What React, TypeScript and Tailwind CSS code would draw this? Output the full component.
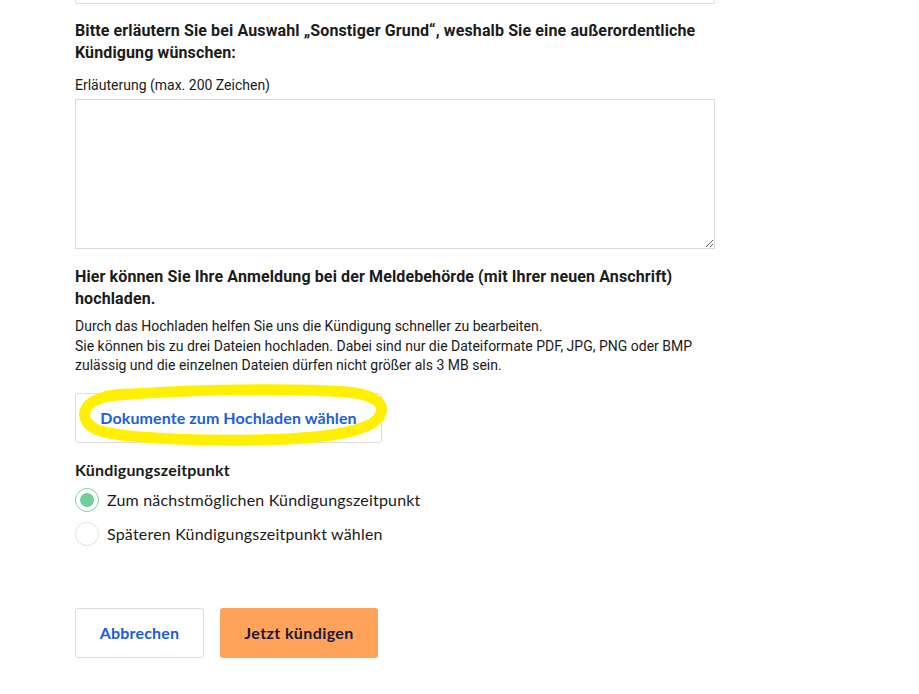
import { useState } from "react";

const heading = "text-[16px] font-bold leading-[22px] tracking-[0.12px] text-[#1b1b1b]";

export default function App() {
  const [choice, setChoice] = useState("next");
  const [text, setText] = useState("");

  return (
    <div className="min-h-[694px] w-[919px] bg-white" style={{ fontFamily: "Roboto, 'Noto Sans', sans-serif" }}>
      <div className="ml-[75px] w-[640px]">
        {/* bottom edge of previous field */}
        <div className="h-[4px] rounded-b-[2px] border border-t-0 border-[#dcdcdc]" />

        <h2 className={`${heading} mt-[16px]`}>
          Bitte erläutern Sie bei Auswahl „Sonstiger Grund“, weshalb Sie eine außerordentliche Kündigung wünschen:
        </h2>
        <label className="mt-[11px] block text-[14px] leading-[20px] text-[#1b1b1b]">Erläuterung (max. 200 Zeichen)</label>
        <textarea
          maxLength={200}
          value={text}
          onChange={(e) => setText(e.target.value)}
          className="mt-[4px] block h-[150px] w-full border border-[#d9d9d9] px-3 py-2 text-sm outline-none"
        />

        <h2 className={`${heading} mt-[17px]`}>
          Hier können Sie Ihre Anmeldung bei der Meldebehörde (mit Ihrer neuen Anschrift) hochladen.
        </h2>
        <p className="mt-[7px] text-[14px] leading-[19.5px] text-[#1b1b1b]">
          Durch das Hochladen helfen Sie uns die Kündigung schneller zu bearbeiten.
          <br />
          Sie können bis zu drei Dateien hochladen. Dabei sind nur die Dateiformate PDF, JPG, PNG oder BMP zulässig und die einzelnen Dateien dürfen nicht größer als 3 MB sein.
        </p>

        <div className="relative mt-[17px] w-[307px]">
          <button
            className="flex h-[50px] w-full items-center justify-center rounded-[3px] border border-[#dedede] bg-white text-[16px] font-bold tracking-[0.1px] text-[#1b5ee0]"
            style={{ fontFamily: "Lato, 'Noto Sans', sans-serif" }}
          >
            Dokumente zum Hochladen wählen
          </button>
          <svg className="pointer-events-none absolute left-[-8px] top-[-12px]" width="330" height="72" viewBox="0 0 330 72" fill="none">
            <path
              d="M40 15 C120 8 230 7 280 11 C305 13 318 22 314 32 C310 46 280 55 220 58 C150 61 60 58 34 50 C20 46 14 36 20 26 C26 18 40 14 60 13"
              stroke="#fff000"
              strokeWidth="11"
              strokeLinecap="round"
              strokeLinejoin="round"
            />
          </svg>
        </div>

        <div style={{ fontFamily: "Lato, 'Noto Sans', sans-serif" }}>
          <div className="mt-[16px] text-[16px] font-bold leading-[22px] tracking-[0.2px] text-[#1b1b1b]">Kündigungszeitpunkt</div>
          <div className="mt-[7px] flex flex-col gap-[10px]">
            {[
              { id: "next", label: "Zum nächstmöglichen Kündigungszeitpunkt" },
              { id: "later", label: "Späteren Kündigungszeitpunkt wählen" },
            ].map((o) => (
              <label key={o.id} className="flex cursor-pointer items-center gap-[8px]" onClick={() => setChoice(o.id)}>
                <span
                  className={`flex h-[24px] w-[24px] items-center justify-center rounded-full border ${
                    choice === o.id ? "border-[#7fd3a0]" : "border-[#e0e0e0]"
                  }`}
                >
                  {choice === o.id && <span className="h-[14px] w-[14px] rounded-full bg-[#6fcf97]" />}
                </span>
                <span className="text-[16px] leading-[24px] tracking-[0.2px] text-[#1b1b1b]">{o.label}</span>
              </label>
            ))}
          </div>

          <div className="mt-[62px] flex gap-[16px]">
            <button className="h-[50px] w-[129px] rounded-[3px] border border-[#dcdcdc] bg-white text-[16px] font-bold tracking-[0.2px] text-[#1b5ee0]">
              Abbrechen
            </button>
            <button className="h-[50px] w-[158px] rounded-[3px] bg-[#ffa35a] text-[16px] font-bold tracking-[0.4px] text-[#1a1a3d]">
              Jetzt kündigen
            </button>
          </div>
        </div>
      </div>
    </div>
  );
}
